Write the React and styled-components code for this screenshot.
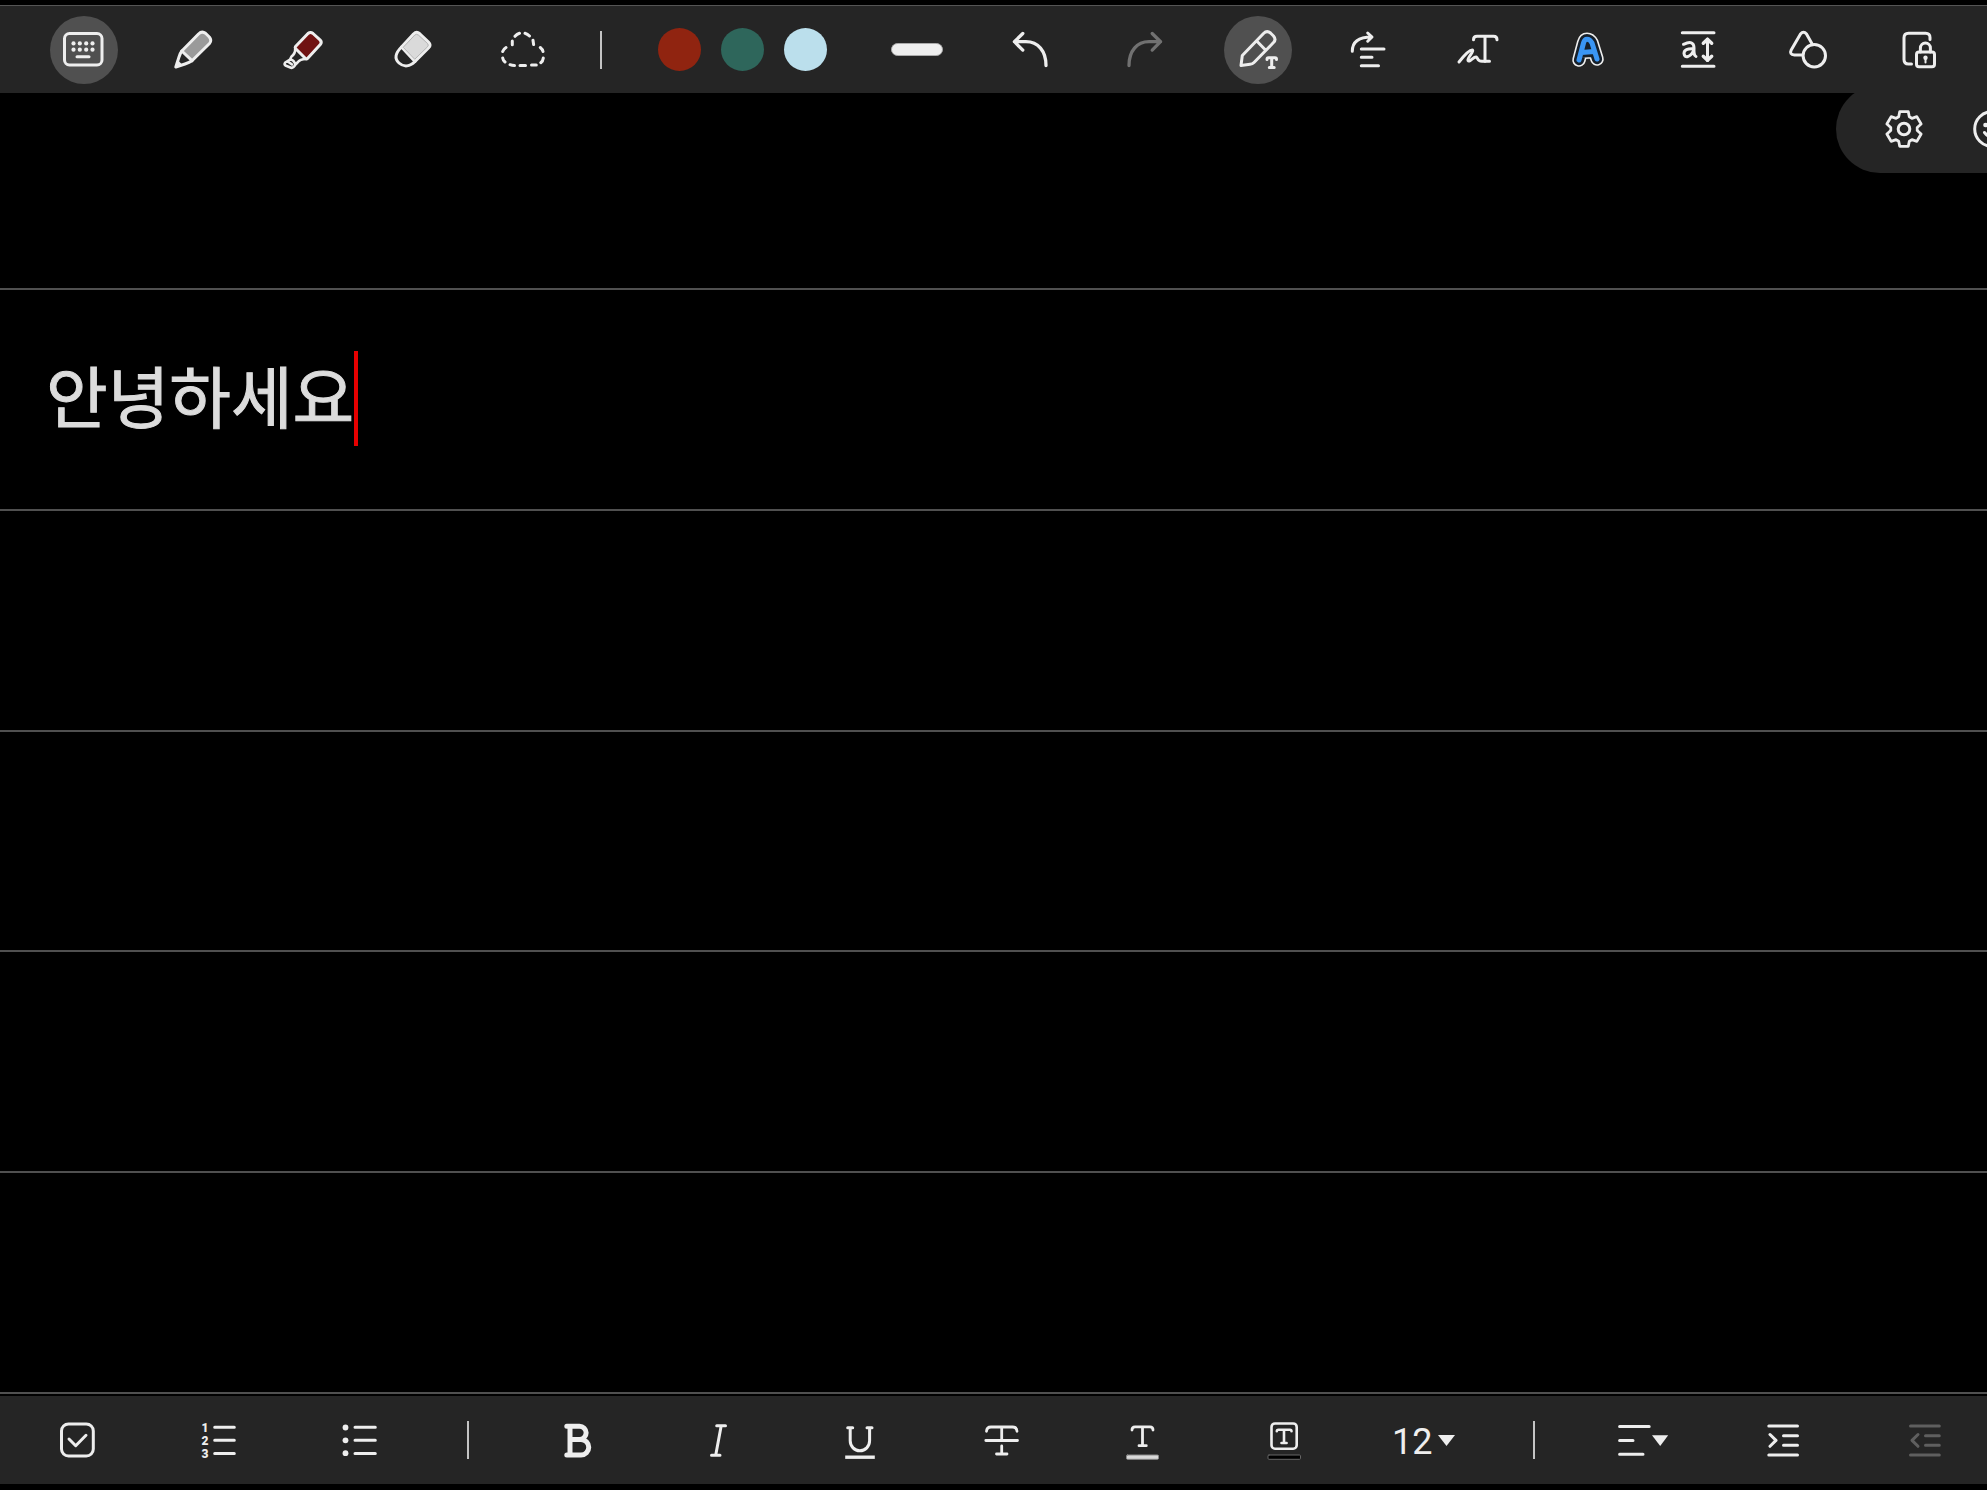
import React, { useState } from 'react';
import styled, { createGlobalStyle, css } from 'styled-components';

const GlobalStyle = createGlobalStyle`
  * {
    box-sizing:     border-box;
  }
  body {
    margin:         0;
    background:     #000;
    font-family:    Roboto, "Noto Sans CJK KR", sans-serif;
  }
`
const Page = styled.div`
  display:          flex;
  flex-direction:   column;
  min-height:       100vh;
  padding:          5px 0 6px;
  overflow:         hidden;
  background:       #000;
`
const bar = css`
  display:          flex;
  align-items:      center;
  background:       #252525;
`
const TopBar = styled.header`
  ${bar}
  position:         relative;
  z-index:          1;
  height:           88px;
  padding:          0 14px 0 29px;
  border-top:       1px solid #555;
`
const BottomBar = styled.footer`
  ${bar}
  height:           88px;
  margin:           2px -9px 0 0;
  padding:          0 0 0 6px;
`
const Slot = styled.div`
  display:          flex;
  flex:             ${props => props.$size} 1 0px;
  min-width:        0;
  align-items:      center;
  justify-content:  center;
  gap:              ${props => props.$gap || 0}px;
`
const IconButton = styled.button`
  display:          flex;
  flex:             none;
  width:            68px;
  height:           68px;
  padding:          0;
  align-items:      center;
  justify-content:  center;
  border:           0;
  border-radius:    50%;
  color:            #eee;
  background:       ${props => props.$active ? '#505050' : 'transparent'};
  cursor:           pointer;

  &:disabled {
    color:          ${props => props.$dim || '#717171'};
    cursor:         default;
  }
`
const Icon = styled.svg`
  flex:             none;
  width:            48px;
  height:           48px;
  overflow:         visible;
  fill:             none;
  stroke:           currentColor;
  stroke-width:     3;
  stroke-linecap:   round;
  stroke-linejoin:  round;
`
const Digit = styled.text`
  fill:             currentColor;
  stroke:           none;
  font-family:      Roboto, sans-serif;
  font-size:        12px;
  font-weight:      900;
  text-anchor:      middle;
`
const Divider = styled.span`
  width:            2px;
  height:           38px;
  background:       #c4c4c4;
`
const Swatch = styled.button`
  width:            43px;
  height:           43px;
  padding:          0;
  border:           0;
  border-radius:    50%;
  background:       ${props => props.$color};
  cursor:           pointer;
`
const Thickness = styled.button`
  width:            52px;
  height:           13px;
  padding:          0;
  border:           1px solid #aaa;
  border-radius:    7px;
  background:       #eee;
  cursor:           pointer;
`
const Note = styled.main`
  position:         relative;
  display:          flex;
  flex:             1;
  flex-direction:   column;
`
const Line = styled.div`
  display:          flex;
  flex:             ${props => props.$first ? '0 0 197px' : '1 0 0px'};
  align-items:      center;
  padding:          0 46px 2px;
  border-bottom:    2px solid #505050;
`
const NoteText = styled.input`
  field-sizing:     content;
  height:           96px;
  padding:          0 0 10px;
  border:           0;
  outline:          0;
  color:            #dcdcdc;
  background:       transparent;
  font-family:      "Noto Sans CJK KR", sans-serif;
  font-size:        67px;
  caret-color:      transparent;
  -webkit-text-stroke: 1px #dcdcdc;
`
const Caret = styled.span`
  width:            4px;
  height:           95px;
  background:       #e60000;
`
const Panel = styled.div`
  position:         absolute;
  top:              -8px;
  right:            -49px;
  display:          flex;
  width:            200px;
  height:           88px;
  padding-left:     24px;
  align-items:      center;
  border-radius:    44px 0 0 44px;
  background:       #252525;
`
const PanelSlot = styled.div`
  display:          flex;
  flex:             0 0 88px;
  justify-content:  center;
`
const SizeLabel = styled.label`
  display:          flex;
  padding-right:    3px;
  align-items:      center;
  gap:              4px;
  color:            #eee;
`
const SizeSelect = styled.select`
  width:            42px;
  height:           48px;
  padding:          4px 0 0;
  border:           0;
  color:            #eee;
  background:       transparent;
  font-family:      Roboto, sans-serif;
  font-size:        36px;
  appearance:       none;
  cursor:           pointer;
`
const Arrow = styled.svg`
  width:            17px;
  height:           11px;
  fill:             currentColor;
`

// outline of a six toothed gear round 24,24
const gear = [0, 1, 2, 3, 4, 5].map(i => {
  const a = (i * 60 + 30) * Math.PI / 180;
  return [[12.2, -5.3], [17.3, -4.3], [17.3, 4.3], [12.2, 5.3]].map(([r, t]) => (
    `${(24 + r * Math.cos(a) - t * Math.sin(a)).toFixed(2)} ${(24 + r * Math.sin(a) + t * Math.cos(a)).toFixed(2)}`
  )).join('L');
}).join('L');

const letterA = 'M15 34 L19.5 17 Q20.5 13.2 23 13.2 Q26 13.2 28 17 L33 33 M17.5 26.5 L30 25.5';

const icons = {
  keyboard: (
    <>
      <rect x="4.5" y="7.5" width="37.5" height="31.5" rx="5" />
      {[13.5, 19.8, 26.2, 32.5].map(x => (
        <g key={x} fill="currentColor" stroke="none">
          <circle cx={x} cy="17.4" r="2.1" />
          <circle cx={x} cy="23.7" r="2.1" />
        </g>
      ))}
      <path d="M17 30.7H29" />
    </>
  ),
  pencil: (
    <>
      <path fill="#9a9a9a" d="M11.8 25L28.5 8Q32 4.6 35.5 7.3L39.3 11Q42.2 14.5 39.5 17.5L22 34.7Z" />
      <path d="M11.8 25Q10.3 27 9 31L5.8 41L15 38Q19.5 36.5 22 34.7" />
      <path fill="currentColor" stroke="none" d="M5 42L7.8 34L13 39.5Z" />
    </>
  ),
  highlighter: (
    <>
      <path fill="#701212" d="M15.5 20.5L28 7.5Q30.5 5.5 33 7.5L40 13.8Q42.3 16 40.3 18.5L27.5 32.5Q26.5 33.5 25.5 32.5L15.5 22.5Q14.8 21.5 15.5 20.5Z" />
      <path strokeWidth="2.6" d="M15.2 22.5Q15.5 27.5 11.5 30.5L10 33.5M26 33Q20 33 17.5 36.5L15.5 38.5M10 33.5L5.2 36.5Q3.6 38.5 6 39.8L11 41.8Q13.5 42.3 15.5 38.5L14.5 36.5Q13 33.5 10 33.5M8.5 36L12 38.5" />
    </>
  ),
  eraser: (
    <>
      <path fill="#dadada" d="M11.5 21L23.5 8Q26.5 5 29.5 7.5L38.5 16Q41.5 19 38.7 21.8L25 35.5Z" />
      <path d="M11.5 21C5.5 27 4 32.5 9 37C14 41.5 20 40.5 25 35.5" />
      <path stroke="#b4b4b4" strokeWidth="1" d="M13.5 21L24.8 9Q26.5 7.5 28.5 9.2L37.5 17.5Q39 19.2 37.5 20.8L25 33Z" />
    </>
  ),
  lasso: (
    <path d="M12.3 18.7V15M15 10.3Q17 8 19.5 7.3M25 7.3Q27.5 8 29.5 10M33 14.2L33.6 18.5M40.3 21.5Q42.5 23.3 43 25.5M43.3 32Q43 35 40.8 36.7M36.3 39H31.5M25.5 39.5H20M14.5 39.5Q12 39.5 10 38.7M5 36Q3 34.3 2.7 32M2.7 25.5Q3.5 23 6 21.5" />
  ),
  undo: <path strokeWidth="3.3" d="M16.8 7.5L8.4 15.7L16.8 24.1M8.4 15.7H20C32 15.7 40 25 40 39.5" />,
  redo: <path strokeWidth="3.3" d="M31.2 7.5L39.6 15.7L31.2 24.1M39.6 15.7H28C16 15.7 8 25 8 39.5" />,
  penText: (
    <>
      <path d="M7 39.5L8.3 29.5L29.5 7.5Q33 4 36.5 7L39.5 10Q42.5 13.5 39.5 16.5L20 36.5Q18.5 38 16 38.3ZM22.7 15L31.5 24" />
      <path d="M33 33.5Q33 31.8 34.5 31.8H41Q42.5 31.8 42.5 33.5M37.7 32V41.5M35.3 41.5H40.2" />
    </>
  ),
  reflow: <path d="M8.3 25.3C8.3 16 15 11 27.5 11M23.7 7L28 11L23.7 15.2M17.3 23H40M17.3 31.3H28M17.3 39.7H34.5" />,
  handText: (
    <>
      <path d="M19.5 13.8Q19.5 10.3 23 10.3H39.5Q43 10.3 43 13.8M31 10.5V35.3" />
      <path d="M5 36C9 31 16 23 18.7 24.2C20 25.5 13 32 14 34.5C15.5 37 20 30 22.5 31.2C24.2 32.2 23 35.3 28 35.3H35.5" />
    </>
  ),
  styleText: (
    <>
      <path strokeWidth="13.5" d={letterA} />
      <path stroke="#16202b" strokeWidth="10.3" d={letterA} />
      <path stroke="#3a96f5" strokeWidth="5" d={letterA} />
    </>
  ),
  lineHeight: (
    <>
      <path d="M8.3 6.7H40M8.3 40.2H40M33.5 13V34.5" />
      <path strokeWidth="3.4" d="M29.3 17.3L33.5 13.2L37.7 17.3M29.3 30.2L33.5 34.3L37.7 30.2" />
      <path d="M9.5 18.3Q20 13.5 20 22C19.8 27 19.8 29.5 22 30.5M20 22.8Q10 22 10 27.5Q10.5 31.5 14 30.5Q18.5 28.5 20 22.8" />
    </>
  ),
  shapes: (
    <>
      <path d="M18.5 29H10.5Q5 28.5 7.2 24L16.5 8Q19.5 4.5 22.5 8L28 17.8" />
      <circle cx="30.3" cy="29.7" r="11.2" />
    </>
  ),
  lock: (
    <>
      <path d="M36 13.5V11.5Q36 7.2 31.7 7.2H14.5Q10 7.2 10 11.7V33.5Q10 38 14.5 38H17.5" />
      <rect x="22.5" y="26" width="18" height="14.7" rx="2.5" />
      <path d="M26.4 26V22A5 5 0 0 1 36.4 22V26" />
      <path strokeWidth="2" d="M31.5 32V36.5" />
      <circle cx="31.5" cy="31.8" r="2.2" fill="currentColor" stroke="none" />
    </>
  ),
  gear: (
    <>
      <path strokeWidth="2.8" d={`M${gear}Z`} />
      <circle cx="24" cy="24" r="5.8" />
    </>
  ),
  smile: (
    <>
      <circle cx="24" cy="24" r="17.3" />
      <path d="M16.5 27.5Q24 37 31.5 27.5" />
      <circle cx="17.5" cy="20" r="2.3" fill="currentColor" stroke="none" />
      <circle cx="30.5" cy="20" r="2.3" fill="currentColor" stroke="none" />
    </>
  ),
  check: (
    <>
      <rect x="8.5" y="8" width="31.8" height="32" rx="7" />
      <path d="M16 23L22.7 29.7L33 19.3" />
    </>
  ),
  numbered: (
    <>
      <Digit x="11" y="15.5">1</Digit>
      <Digit x="11" y="28.5">2</Digit>
      <Digit x="11" y="41.5">3</Digit>
      <path d="M20.7 11.3H40.3M20.7 24.3H40.3M20.7 37.5H40.3" />
    </>
  ),
  bullets: (
    <>
      {[11.5, 24.3, 37.2].map(y => (
        <circle key={y} cx="10.5" cy={y} r="2.9" fill="currentColor" stroke="none" />
      ))}
      <path d="M20 11.3H40.3M20 24.3H40.3M20 37.5H40.3" />
    </>
  ),
  bold: <path strokeWidth="5" d="M13.8 10.2H26.5A6.65 6.65 0 0 1 26.5 23.5H17M28 23.5A7.75 7.75 0 0 1 28 39H13.8M17 10.2V39M26 23.5H28" />,
  italic: <path d="M22.7 9.7H31.5M17.5 39.3H26M27.2 9.7L21.7 39.3" />,
  underline: (
    <>
      <path d="M11.7 11.7H16.7M31 11.7H36M14.2 12V24.8A9.7 10 0 0 0 33.6 24.8V12" />
      <path strokeLinecap="butt" strokeWidth="3.4" d="M9.2 41.2H38.8" />
    </>
  ),
  strike: <path strokeWidth="2.8" d="M9.5 15.3Q9.7 11 14 11H35.5Q39.8 11 40 15.3M24.7 11V24M8.8 24.5H40.5M24.7 30V38M19.5 38H30" />,
  textColor: (
    <>
      <path strokeWidth="2.8" d="M14 14Q14 10.8 17 10.8H32Q35 10.8 35 14M24.5 11V29.5M21 29.7H28.3" />
      <rect x="8.5" y="39" width="32" height="4.3" rx="1" fill="#d9d9d9" stroke="#8a8a8a" strokeWidth="1" />
    </>
  ),
  textBox: (
    <>
      <rect x="11.5" y="7.5" width="25.2" height="25.2" rx="3.5" strokeWidth="2.6" />
      <path strokeWidth="2.6" d="M16.8 15.3Q16.8 13.7 18.5 13.7H30Q31.5 13.7 31.5 15.3M24 14V27M21.5 27H26.6" />
      <rect x="8" y="39" width="32.5" height="4.3" rx="1" fill="#000" stroke="#666" strokeWidth="1" />
    </>
  ),
  align: (
    <>
      <path d="M.6 10.5H30.2M.6 24.4H14M.6 38.3H24" />
      <path fill="currentColor" stroke="none" d="M33 19.3H49.2L41.2 30Z" />
    </>
  ),
  indent: <path d="M8.8 10H37.5M23.5 19.7H37.5M23.5 29.3H37.5M8.8 38.9H37.5M10 18.5L16 24.4L10 30.3" />,
  outdent: <path d="M9.5 10H38.3M24.5 19.7H38.3M24.5 29.3H38.3M9.5 38.9H38.3M17 18.5L11 24.4L17 30.3" />
};

const drawTools = [
  { name: 'Keyboard', icon: 'keyboard', active: true },
  { name: 'Pen', icon: 'pencil' },
  { name: 'Highlighter', icon: 'highlighter' },
  { name: 'Eraser', icon: 'eraser' },
  { name: 'Lasso', icon: 'lasso' }
]
const swatches = [
  { name: 'Red', color: '#902410' },
  { name: 'Green', color: '#2e665b' },
  { name: 'Light blue', color: '#bbdfec' }
]
const history = [
  { name: 'Undo', icon: 'undo' },
  { name: 'Redo', icon: 'redo', disabled: true }
]
const penTools = [
  { name: 'Pen to text', icon: 'penText', active: true },
  { name: 'Straighten', icon: 'reflow' },
  { name: 'Convert to text', icon: 'handText' },
  { name: 'Text style', icon: 'styleText' },
  { name: 'Text size', icon: 'lineHeight' },
  { name: 'Shapes', icon: 'shapes' },
  { name: 'Lock canvas', icon: 'lock' }
]
const listTools = [
  { name: 'Check list', icon: 'check' },
  { name: 'Numbered list', icon: 'numbered' },
  { name: 'Bulleted list', icon: 'bullets' }
]
const fontTools = [
  { name: 'Bold', icon: 'bold' },
  { name: 'Italic', icon: 'italic' },
  { name: 'Underline', icon: 'underline' },
  { name: 'Strikethrough', icon: 'strike' },
  { name: 'Text colour', icon: 'textColor' },
  { name: 'Text background', icon: 'textBox' }
]
const paragraphTools = [
  { name: 'Align', icon: 'align' },
  { name: 'Indent', icon: 'indent' },
  { name: 'Outdent', icon: 'outdent', disabled: true, dim: '#5f5f5f' }
]

const ToolButton = ({ tool }) => (
  <IconButton
    type="button"
    aria-label={tool.name}
    disabled={tool.disabled}
    $active={tool.active}
    $dim={tool.dim}
  >
    <Icon viewBox="0 0 48 48" aria-hidden="true">{icons[tool.icon]}</Icon>
  </IconButton>
)

const Tools = ({ items, size }) => items.map(tool => (
  <Slot key={tool.name} $size={size}>
    <ToolButton tool={tool} />
  </Slot>
))

const App = () => {
  const [text, setText] = useState('안녕하세요');
  const [size, setSize] = useState('12');

  return (
    <Page>
      <GlobalStyle />
      <TopBar>
        <Tools items={drawTools} size={110} />
        <Slot $size={43}><Divider /></Slot>
        <Slot $size={240} $gap={20}>
          {swatches.map(s => (
            <Swatch key={s.name} type="button" aria-label={s.name} $color={s.color} />
          ))}
        </Slot>
        <Slot $size={110}>
          <Thickness type="button" aria-label="Thickness" />
        </Slot>
        <Tools items={history} size={115} />
        <Tools items={penTools} size={110} />
      </TopBar>
      <Note>
        <Line $first />
        <Line>
          <NoteText
            aria-label="Note text"
            value={text}
            onChange={e => setText(e.target.value)}
          />
          <Caret />
        </Line>
        <Line />
        <Line />
        <Line />
        <Line />
        <Panel>
          <PanelSlot><ToolButton tool={{ name: 'Settings', icon: 'gear' }} /></PanelSlot>
          <PanelSlot><ToolButton tool={{ name: 'Emoji', icon: 'smile' }} /></PanelSlot>
        </Panel>
      </Note>
      <BottomBar>
        <Tools items={listTools} size={141} />
        <Slot $size={76}><Divider /></Slot>
        <Tools items={fontTools} size={141} />
        <Slot $size={141}>
          <SizeLabel>
            <SizeSelect
              aria-label="Font size"
              value={size}
              onChange={e => setSize(e.target.value)}
            >
              <option>10</option>
              <option>12</option>
              <option>14</option>
              <option>16</option>
            </SizeSelect>
            <Arrow viewBox="0 0 17 11" aria-hidden="true"><path d="M0 0H17L8.5 11Z" /></Arrow>
          </SizeLabel>
        </Slot>
        <Slot $size={76}><Divider /></Slot>
        <Tools items={paragraphTools} size={141} />
      </BottomBar>
    </Page>
  );
}

export default App;
